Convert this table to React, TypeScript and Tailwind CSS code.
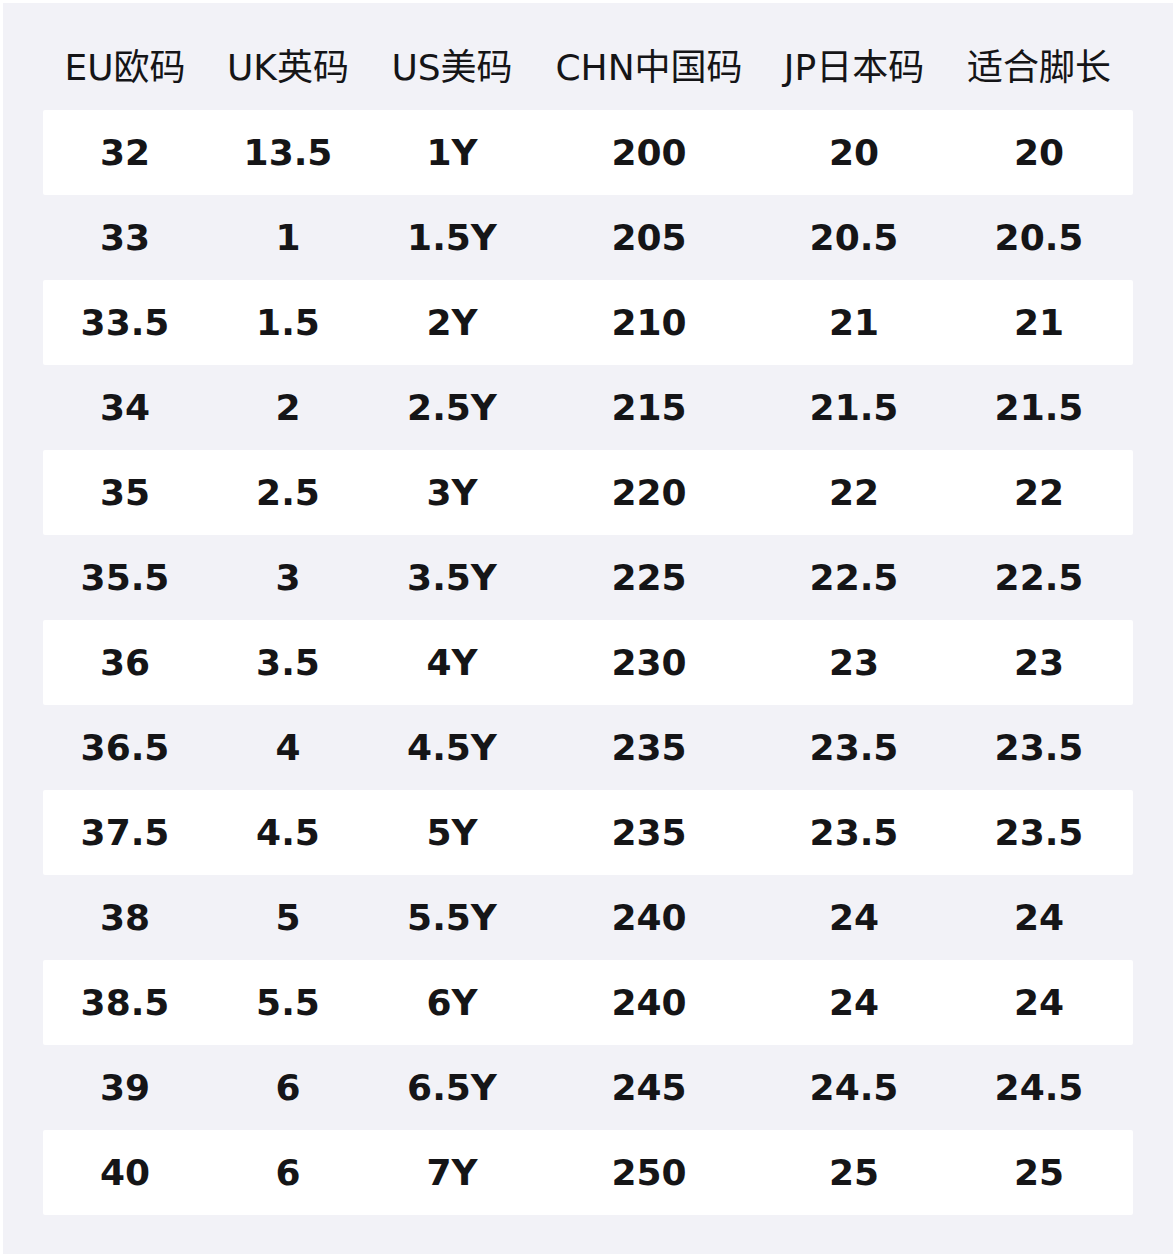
import React from 'react';

const HEADERS = ['EU欧码', 'UK英码', 'US美码', 'CHN中国码', 'JP日本码', '适合脚长'];

const ROWS: string[][] = [
  ['32', '13.5', '1Y', '200', '20', '20'],
  ['33', '1', '1.5Y', '205', '20.5', '20.5'],
  ['33.5', '1.5', '2Y', '210', '21', '21'],
  ['34', '2', '2.5Y', '215', '21.5', '21.5'],
  ['35', '2.5', '3Y', '220', '22', '22'],
  ['35.5', '3', '3.5Y', '225', '22.5', '22.5'],
  ['36', '3.5', '4Y', '230', '23', '23'],
  ['36.5', '4', '4.5Y', '235', '23.5', '23.5'],
  ['37.5', '4.5', '5Y', '235', '23.5', '23.5'],
  ['38', '5', '5.5Y', '240', '24', '24'],
  ['38.5', '5.5', '6Y', '240', '24', '24'],
  ['39', '6', '6.5Y', '245', '24.5', '24.5'],
  ['40', '6', '7Y', '250', '25', '25'],
];

const GRID = 'grid grid-cols-[164px_162px_166px_228px_182px_188px]';

export default function App() {
  return (
    <div
      className="w-[1176px] h-[1258px] bg-white p-[3px] pb-[4px]"
      style={{ fontFamily: '"DejaVu Sans", "Noto Sans CJK SC", sans-serif' }}
    >
      <div className="h-full bg-[#f2f2f7] px-[40px] pt-[22px] text-[#151517]">
        {/* HEADER */}
        <div className={`${GRID} h-[85px] items-center text-[36px] leading-none`}>
          {HEADERS.map((h) => (
            <div key={h} className="text-center whitespace-nowrap">
              {h}
            </div>
          ))}
        </div>

        {/* ROWS */}
        {ROWS.map((row, i) => (
          <div
            key={i}
            className={`${GRID} h-[85px] items-center rounded-[2px] text-[36px] font-bold leading-none ${
              i % 2 === 0 ? 'bg-white' : 'bg-transparent'
            }`}
          >
            {row.map((cell, j) => (
              <div key={j} className="text-center">
                {cell}
              </div>
            ))}
          </div>
        ))}
      </div>
    </div>
  );
}
